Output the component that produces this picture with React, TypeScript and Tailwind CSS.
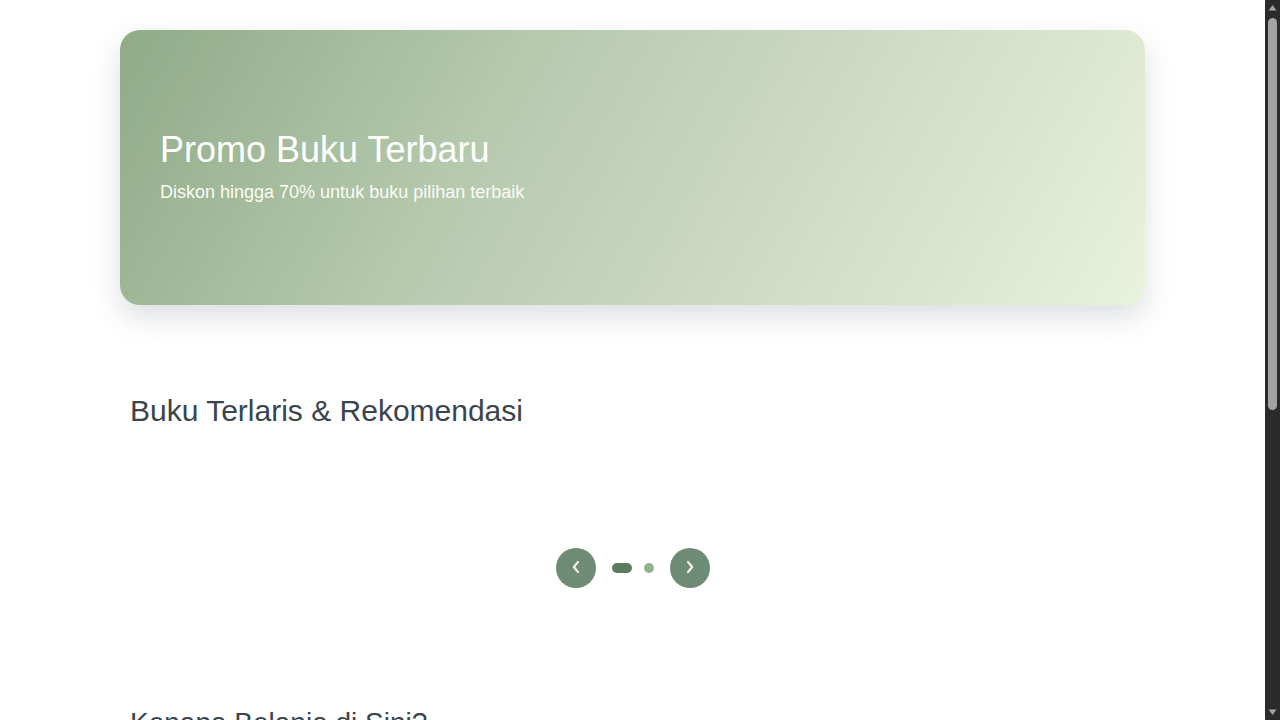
const features = [
   { title: "Harga Terjangkau", text: "Diskon menarik setiap minggu untuk semua kategori buku." },
   { title: "Pengiriman Cepat", text: "Pesanan dikirim di hari yang sama ke seluruh Indonesia." },
   { title: "Buku Original", text: "Semua buku dijamin asli langsung dari penerbit resmi." },
]

const Chevron = ({ dir }: { dir: "left" | "right" }) => (
   <svg width="10" height="14" viewBox="0 0 10 14" fill="none">
      <path
         d={dir === "left" ? "M7 2 L2.8 7 L7 12" : "M3 2 L7.2 7 L3 12"}
         stroke="#f6f1de"
         strokeWidth="2.2"
         strokeLinecap="round"
         strokeLinejoin="round"
      />
   </svg>
)

// looks like the classic browser scrollbar in the screenshot
const ScrollBar = () => (
   <aside className="flex h-full w-[15px] shrink-0 flex-col items-center bg-[#2b2b2b]">
      <svg width="9" height="16" viewBox="0 0 9 16" className="shrink-0">
         <path d="M4.5 5 L8.5 10.5 L0.5 10.5 Z" fill="#a3a3a3" />
      </svg>
      <div className="mt-[2px] h-[392px] w-[9px] rounded-full bg-[#a3a3a3]" />
      <div className="flex-1" />
      <svg width="9" height="16" viewBox="0 0 9 16" className="shrink-0">
         <path d="M0.5 5.5 L8.5 5.5 L4.5 11 Z" fill="#a3a3a3" />
      </svg>
   </aside>
)

const App = () => {
   return (
      <div className="flex h-screen bg-white font-['Liberation_Sans',Arial,sans-serif]">
         <div className="flex-1 overflow-y-auto [scrollbar-width:none]">
            <main className="min-h-[1262px] pt-[30px]">
               <section
                  className="mx-auto flex h-[275px] max-w-[1025px] flex-col justify-center rounded-[20px] bg-[linear-gradient(120deg,#8fab88_0%,#b5c9ad_35%,#cdd8c2_62%,#e9f2da_100%)] px-10 shadow-[0_12px_28px_rgba(60,70,90,0.18)]"
               >
                  <h1 className="text-[36px] leading-[1.15] text-white">Promo Buku Terbaru</h1>
                  <p className="mt-[8px] text-[18px] text-[#fbfbf4]">Diskon hingga 70% untuk buku pilihan terbaik</p>
               </section>

               <section className="mx-auto max-w-[1025px] px-[10px] pt-[89px]">
                  <h2 className="text-[30px] leading-[1.15] text-[#3a444c]">Buku Terlaris &amp; Rekomendasi</h2>
                  <div className="h-[119px]" />
                  <div className="flex items-center justify-center gap-4">
                     <button className="flex h-10 w-10 items-center justify-center rounded-full bg-[#6e8b76] pb-[2px]">
                        <Chevron dir="left" />
                     </button>
                     <div className="flex items-center gap-3">
                        <span className="h-[10px] w-5 rounded-full bg-[#5a7a62]" />
                        <span className="h-[10px] w-[10px] rounded-full bg-[#8fb38a]" />
                     </div>
                     <button className="flex h-10 w-10 items-center justify-center rounded-full bg-[#6e8b76] pb-[2px]">
                        <Chevron dir="right" />
                     </button>
                  </div>
               </section>

               <section className="mx-auto max-w-[1025px] px-[10px] pt-[119px] pb-20">
                  <h2 className="text-[28px] leading-[1.15] text-[#3a444c]">Kenapa Belanja di Sini?</h2>
                  <div className="mt-8 grid grid-cols-3 gap-6">
                     {features.map(f => (
                        <div key={f.title} className="rounded-2xl bg-[#f1f5ec] p-6">
                           <h3 className="text-lg text-[#3a444c]">{f.title}</h3>
                           <p className="mt-2 text-sm text-[#5b6670]">{f.text}</p>
                        </div>
                     ))}
                  </div>
               </section>
            </main>
         </div>
         <ScrollBar />
      </div>
   )
}

export default App
